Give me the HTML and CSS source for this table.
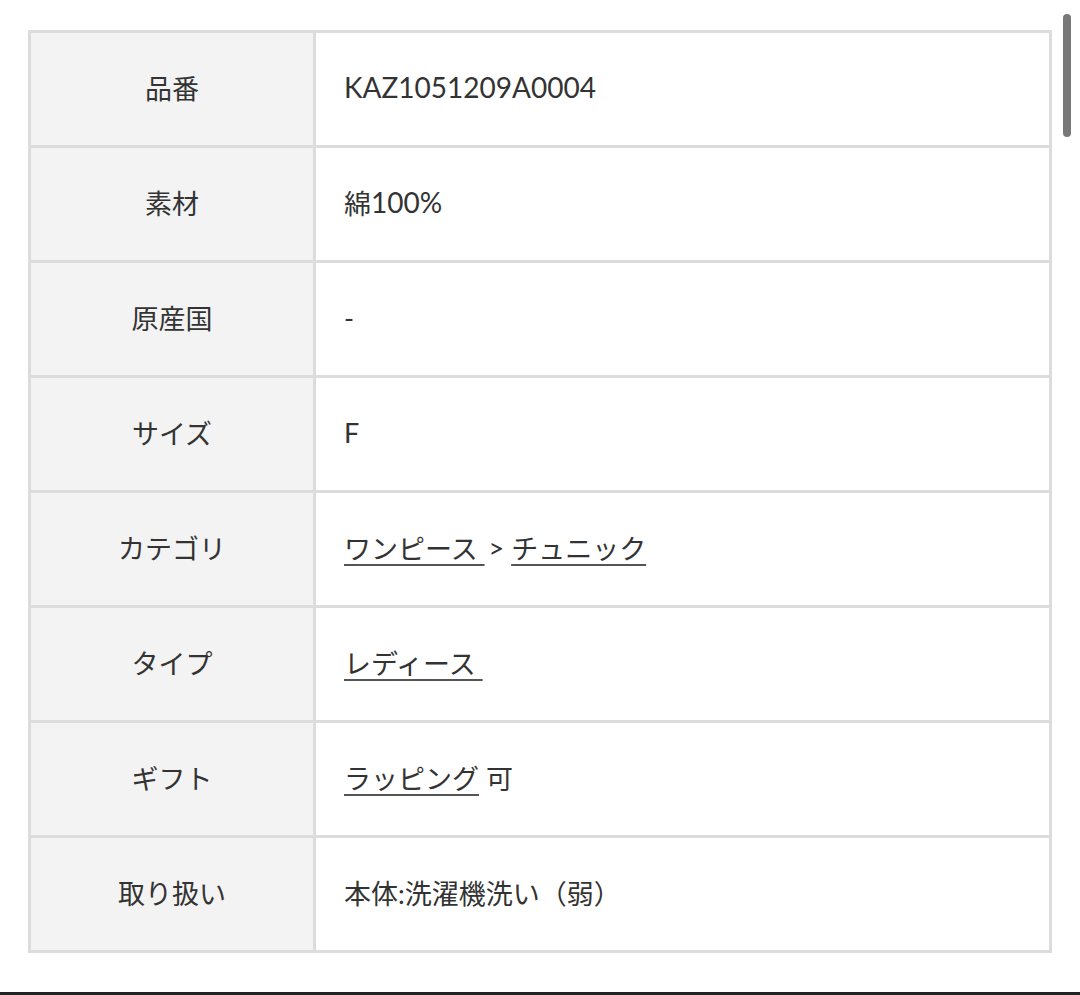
FILE: index.html
```html
<!DOCTYPE html>
<html lang="ja">
<head>
<meta charset="utf-8">
<link rel="stylesheet" href="styles.css">
</head>
<body>
<div class="page">
  <div class="spec">
    <div class="th">品番</div><div class="td"><span class="num">KAZ1051209A0004</span></div>
    <div class="th">素材</div><div class="td">綿<span class="num">100%</span></div>
    <div class="th">原産国</div><div class="td">-</div>
    <div class="th">サイズ</div><div class="td">F</div>
    <div class="th">カテゴリ</div><div class="td"><a class="lnk" href="#">ワンピース </a><span class="sep">&gt; </span><a class="lnk" href="#">チュニック</a></div>
    <div class="th">タイプ</div><div class="td"><a class="lnk" href="#">レディース </a></div>
    <div class="th">ギフト</div><div class="td"><a class="lnk" href="#">ラッピング</a> 可</div>
    <div class="th">取り扱い</div><div class="td">本体:洗濯機洗い（弱）</div>
  </div>
  <div class="bottom-line"></div>
</div>
<div class="scroll-thumb"></div>
</body>
</html>
```
FILE: styles.css
```css
html, body {
  margin: 0;
  padding: 0;
  background: #fff;
}
body {
  font-family: Lato, "Noto Sans CJK JP", sans-serif;
  color: #333;
  font-size: 27px;
  overflow: hidden;
}
.page {
  padding-top: 30px;
}
.spec {
  margin-left: 28px;
  width: 1024px;
  box-sizing: border-box;
  display: grid;
  grid-template-columns: 282px 733px;
  grid-auto-rows: 112px;
  gap: 3px;
  padding: 3px;
  background: #dcdcdc;
}
.th {
  background: #f3f3f3;
  display: flex;
  align-items: center;
  justify-content: center;
  padding-bottom: 4px;
}
.td {
  background: #fff;
  display: flex;
  align-items: center;
  padding-left: 28px;
  padding-bottom: 4px;
  white-space: pre;
}
.num {
  font-size: 28px;
}
.sep {
  margin-left: 4px;
}
.lnk {
  color: #333;
  text-decoration: underline;
  text-decoration-color: #555;
  text-decoration-thickness: 2px;
  text-underline-offset: 5px;
}
.bottom-line {
  margin-top: 39px;
  height: 3px;
  background: #222;
}
.scroll-thumb {
  position: absolute;
  left: 1063px;
  top: 14px;
  width: 8px;
  height: 123px;
  border-radius: 4px;
  background: #787878;
}
```
